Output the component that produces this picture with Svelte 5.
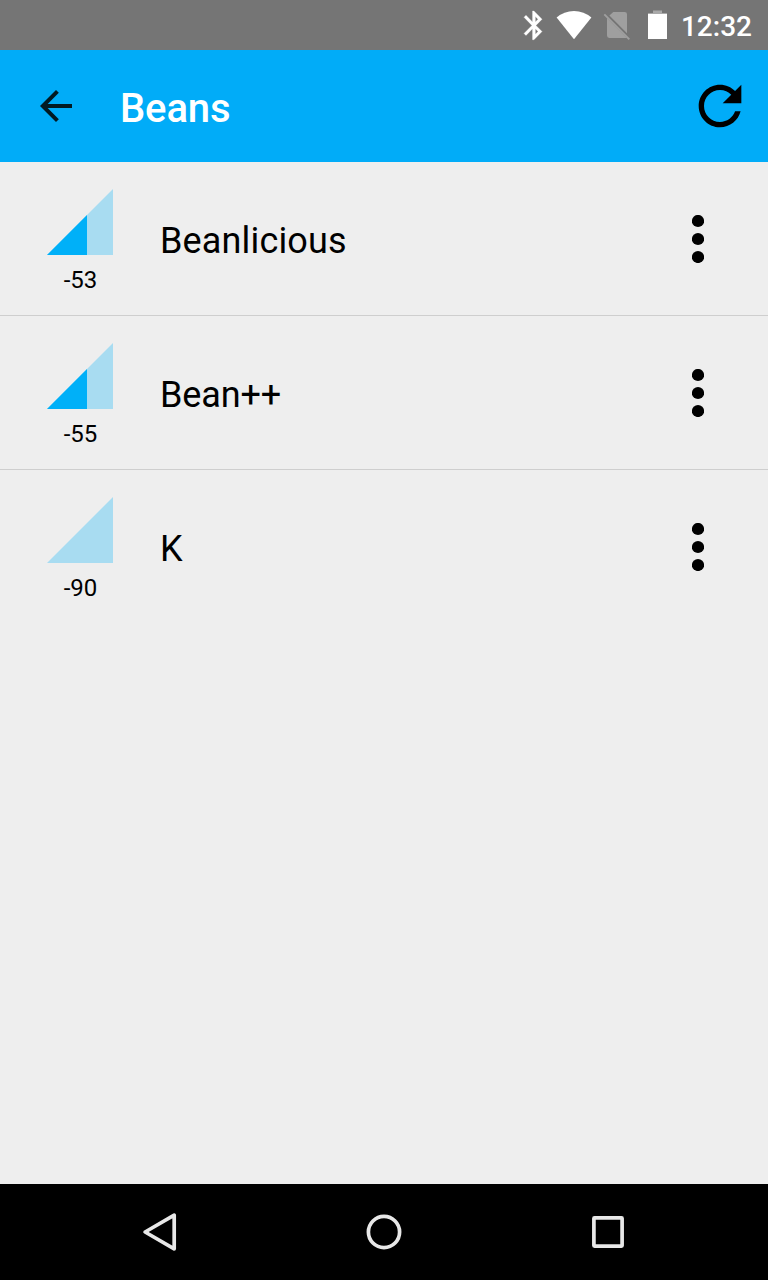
<script>
  const beans = [
    { name: 'Beanlicious', rssi: -53, level: 40, tracking: 0.16 },
    { name: 'Bean++', rssi: -55, level: 40, tracking: -0.15 },
    { name: 'K', rssi: -90, level: 0, tracking: 0 }
  ];
</script>

<div class="screen">
  <div class="status">
    <svg width="260" height="50" viewBox="508 0 260 50" class="indicators">
      <path transform="translate(516.9 8.1) scale(1.42 1.44)" fill="#fff" stroke="#fff" stroke-width=".2" d="M17.71 7.71 12 2h-1v7.59L6.41 5 5 6.41 10.59 12 5 17.59 6.41 19 11 14.41V22h1l5.71-5.71-4.3-4.29zM13 5.83l1.88 1.88L13 9.59zm1.88 10.46L13 18.17v-3.76z" />
      <path fill="#fff" d="M556.6 17.6Q564 11 574 11T591.4 17.6L574 39.2z" />
      <path fill="#9f9f9f" d="M613.3 12H624.7Q627 12 627 14.3V33.2L609.4 15.6zM607 17.9 627 37.9H609.3Q607 37.9 607 35.6z" />
      <path stroke="#9f9f9f" stroke-width="1.9" d="M604.3 14.3 629.3 39.3" />
      <path fill="#a9a9a9" d="M653 10.5h9V13h5v2h-19v-2h5z" />
      <path fill="#fff" d="M648 14h19v25h-19z" />
    </svg>
    <span class="time">12:32</span>
  </div>

  <header>
    <svg class="back" width="48" height="48" viewBox="0 0 24 24"><path fill="#021a23" d="M20 11H7.83l5.59-5.59L12 4l-8 8 8 8 1.41-1.41L7.83 13H20z" /></svg>
    <h1>Beans</h1>
    <svg width="64" height="64" viewBox="0 0 24 24"><path d="M17.65 6.35C16.2 4.9 14.21 4 12 4c-4.42 0-7.99 3.58-7.99 8s3.57 8 7.99 8c3.73 0 6.84-2.55 7.73-6h-2.08c-.82 2.33-3.04 4-5.65 4-3.31 0-6-2.69-6-6s2.69-6 6-6c1.66 0 3.14.69 4.22 1.78L13 11h7V4z" /></svg>
  </header>

  <main>
    {#each beans as bean}
      <div class="row">
        <div class="signal">
          <svg width="66" height="66" viewBox="0 0 66 66">
            <path fill="#a8dcf1" d="M0 66 66 0V66z" />
            {#if bean.level}<path fill="#00b0f8" d="M0 66 {bean.level} {66 - bean.level}V66z" />{/if}
          </svg>
          <span class="rssi">{bean.rssi}</span>
        </div>
        <span class="name" style="letter-spacing: {bean.tracking}px">{bean.name}</span>
        <svg width="12" height="48" viewBox="0 0 12 48"><circle cx="6" cy="6" r="6.1" /><circle cx="6" cy="24" r="6.1" /><circle cx="6" cy="42" r="6.1" /></svg>
      </div>
    {/each}
  </main>

  <nav>
    <svg width="40" height="44" viewBox="140 1210 40 44"><path d="M174.2 1215.2V1248.8L145.1 1232z" /></svg>
    <svg width="40" height="44" viewBox="364 1210 40 44"><circle cx="384" cy="1232" r="15.6" /></svg>
    <svg width="40" height="44" viewBox="588 1210 40 44"><rect x="593.9" y="1217.9" width="28.2" height="28.2" rx="0.6" /></svg>
  </nav>
</div>

<style>
  :global(body) { margin: 0; }
  .screen {
    width: 768px;
    height: 1280px;
    display: flex;
    flex-direction: column;
    background: #eee;
    color: #000;
    font-family: Roboto, sans-serif;
    overflow: hidden;
  }
  svg { display: block; flex: none; }
  .status {
    height: 50px;
    flex: none;
    display: grid;
    justify-content: end;
    background: #757575;
  }
  .indicators, .time { grid-area: 1 / 1; }
  .time {
    justify-self: end;
    padding: 10px 16px 0 0;
    font-size: 28px;
    line-height: 33px;
    font-weight: 500;
    color: #fff;
  }
  header {
    box-sizing: border-box;
    height: 112px;
    flex: none;
    display: flex;
    align-items: center;
    padding: 0 16px 0 32px;
    background: #01acf8;
  }
  h1 {
    flex: 1;
    margin: 6px 0 0 40px;
    font-size: 40px;
    line-height: 48px;
    font-weight: 500;
    letter-spacing: -0.15px;
    color: #fff;
  }
  main { flex: 1; }
  .row {
    box-sizing: border-box;
    height: 154px;
    display: flex;
    align-items: center;
    padding-right: 64px;
    border-bottom: 1px solid #cecece;
  }
  .row:last-child { border-bottom-color: transparent; }
  .signal {
    width: 160px;
    height: 99px;
    display: flex;
    flex-direction: column;
    align-items: center;
  }
  .rssi {
    margin-top: 11px;
    padding-left: 1px;
    font-size: 24px;
    line-height: 28px;
  }
  .name {
    flex: 1;
    margin-top: 4px;
    font-size: 36px;
    line-height: 42px;
  }
  nav {
    box-sizing: border-box;
    height: 96px;
    flex: none;
    display: flex;
    align-items: center;
    justify-content: space-between;
    padding: 0 140px;
    background: #000;
  }
  nav svg {
    fill: none;
    stroke: #e8e8e8;
    stroke-width: 3.7;
    stroke-linejoin: round;
  }
</style>
